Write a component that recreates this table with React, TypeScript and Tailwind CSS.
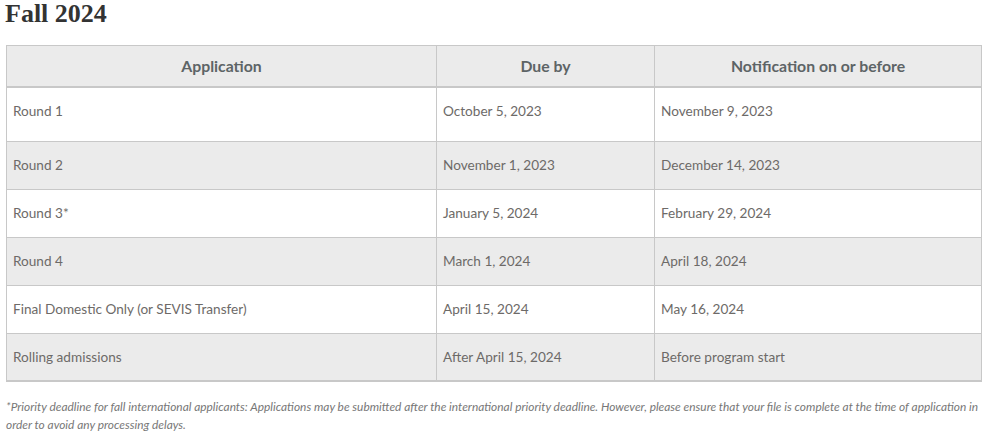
import React from "react";

const rows = [
  ["Round 1", "October 5, 2023", "November 9, 2023"],
  ["Round 2", "November 1, 2023", "December 14, 2023"],
  ["Round 3*", "January 5, 2024", "February 29, 2024"],
  ["Round 4", "March 1, 2024", "April 18, 2024"],
  ["Final Domestic Only (or SEVIS Transfer)", "April 15, 2024", "May 16, 2024"],
  ["Rolling admissions", "After April 15, 2024", "Before program start"],
];

export default function App() {
  return (
    <div className="w-[985px] h-[440px] bg-white overflow-hidden" style={{ fontFamily: "Lato, 'Open Sans', sans-serif" }}>
      <h2
        className="pl-[5px] h-[45px] text-[26px] leading-[28px] font-bold text-[#333]"
        style={{ fontFamily: "'Liberation Serif', serif" }}
      >
        Fall 2024
      </h2>
      <div className="ml-[6px] w-[976px] border-l border-t border-[#c8c8c8]">
        <div className="grid grid-cols-[430px_218px_327px] bg-[#ebebeb] border-b-2 border-[#c8c8c8] h-[42px]">
          {["Application", "Due by", "Notification on or before"].map((h) => (
            <div key={h} className="border-r border-[#c8c8c8] flex items-center justify-center text-[15.8px] font-bold text-[#5d6466]">
              {h}
            </div>
          ))}
        </div>
        {rows.map((r, i) => (
          <div
            key={i}
            className={`grid grid-cols-[430px_218px_327px] border-[#c8c8c8] ${
              i % 2 === 1 ? "bg-[#ebebeb]" : "bg-white"
            } ${i === 0 ? "h-[54px]" : "h-[48px]"} ${i === rows.length - 1 ? "border-b-2" : "border-b"}`}
          >
            {r.map((c, j) => (
              <div
                key={j}
                className={`border-r border-[#c8c8c8] flex items-center px-[6px] text-[13.6px] text-[#6d6a68] ${i === 0 ? "pb-[6px]" : ""}`}
              >
                {c}
              </div>
            ))}
          </div>
        ))}
      </div>
      <p className="ml-[6px] mt-[16px] text-[11.9px] leading-[18px] italic text-[#777]">
        *Priority deadline for fall international applicants: Applications may be submitted after the international priority deadline. However, please ensure that your file is complete at the time of application in
        <br />
        order to avoid any processing delays.
      </p>
    </div>
  );
}
